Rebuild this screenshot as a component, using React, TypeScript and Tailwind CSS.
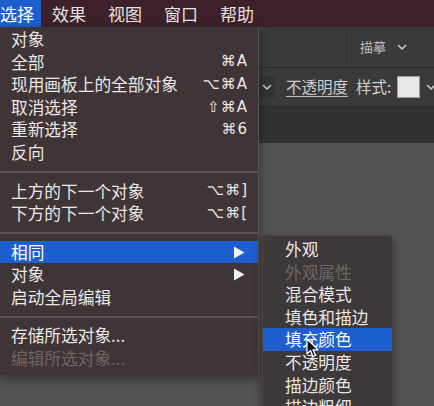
import React from 'react';

type Item = { label: string; shortcut?: string; arrow?: boolean; active?: boolean; disabled?: boolean } | 'sep';

const menuItems: Item[] = [
  { label: '对象' },
  { label: '全部', shortcut: '⌘A' },
  { label: '现用画板上的全部对象', shortcut: '⌥⌘A' },
  { label: '取消选择', shortcut: '⇧⌘A' },
  { label: '重新选择', shortcut: '⌘6' },
  { label: '反向' },
  'sep',
  { label: '上方的下一个对象', shortcut: '⌥⌘]' },
  { label: '下方的下一个对象', shortcut: '⌥⌘[' },
  'sep',
  { label: '相同', arrow: true, active: true },
  { label: '对象', arrow: true },
  { label: '启动全局编辑' },
  'sep',
  { label: '存储所选对象...' },
  { label: '编辑所选对象...', disabled: true },
];

const subItems: { label: string; active?: boolean; disabled?: boolean }[] = [
  { label: '外观' },
  { label: '外观属性', disabled: true },
  { label: '混合模式' },
  { label: '填色和描边' },
  { label: '填充颜色', active: true },
  { label: '不透明度' },
  { label: '描边颜色' },
  { label: '描边粗细' },
];

const font = { fontFamily: '"Noto Sans CJK SC", "DejaVu Sans", sans-serif' };

const Chevron = ({ className = '' }: { className?: string }) => (
  <svg width="10" height="7" viewBox="0 0 10 7" className={`shrink-0 ${className}`}>
    <path d="M1.5 1.5 L5 5 L8.5 1.5" fill="none" stroke="#c9c9c9" strokeWidth="1.6" strokeLinecap="round" strokeLinejoin="round" />
  </svg>
);

export default function App() {
  return (
    <div className="relative w-[434px] h-[406px] overflow-hidden bg-[#535353] text-[#ebe7e7]" style={font}>
      {/* Menu bar */}
      <div className="flex h-[27px] bg-[#3d2029] text-[17px] leading-[27px] text-[#e6e1e2] whitespace-nowrap">
        <div className="w-[41px] shrink-0 bg-[#1d5fcf] text-white pl-0">选择</div>
        <div className="px-[11px]">效果</div>
        <div className="px-[11px]">视图</div>
        <div className="px-[11px]">窗口</div>
        <div className="px-[11px]">帮助</div>
      </div>

      {/* Control bar behind the menu */}
      <div className="flex h-[41px] bg-[#3a3a3a] border-b border-[#2e2e2e]">
        <div className="w-[347px] shrink-0 border-r border-[#333]" />
        <div className="flex items-center gap-[11px] pl-[13px] text-[13px] text-[#bdbdbd] whitespace-nowrap">
          <span>描摹</span>
          <Chevron />
        </div>
      </div>
      <div className="flex items-center h-[39px] bg-[#3a3a3a] border-b border-[#2a2a2a] text-[15.5px] text-[#cfcfcf] whitespace-nowrap">
        <div className="w-[258px] shrink-0" />
        <div className="flex shrink-0 items-center justify-center w-[17px] h-[22px] bg-[#333]">
          <Chevron />
        </div>
        <span className="ml-[11px] shrink-0 underline underline-offset-[3px] decoration-[#bdbdbd]">不透明度</span>
        <span className="ml-[8px] shrink-0">样式:</span>
        <div className="ml-[6px] shrink-0 w-[23px] h-[22px] bg-[#e8e8e8] border border-[#9a9a9a]" />
        <Chevron className="ml-[6px]" />
      </div>
      <div className="h-[36px] bg-[#323232]" />

      {/* Select dropdown */}
      <div className="absolute left-0 top-[27px] w-[259px] pt-[1px] pb-[5px] bg-[#3f3536] border-r border-[#5a5153] shadow-[0_4px_10px_rgba(0,0,0,0.4)] text-[16.7px]">
        {menuItems.map((it, i) =>
          it === 'sep' ? (
            <div key={i} className="h-[16px] flex items-center">
              <div className="w-full h-[2px] bg-[#5b5355]" />
            </div>
          ) : (
            <div
              key={i}
              className={`flex items-center h-[22.6px] pl-[11px] pr-[10px] ${it.active ? 'bg-[#1d5fcf] text-white' : ''} ${it.disabled ? 'text-[#6d6566]' : ''}`}
            >
              <span className="flex-1 leading-none">{it.label}</span>
              {it.shortcut && (
                <span className="leading-none text-[15px] tracking-[1px]" style={{ fontFamily: '"DejaVu Sans", sans-serif' }}>
                  {it.shortcut}
                </span>
              )}
              {it.arrow && (
                <svg width="12" height="13" viewBox="0 0 12 13" className="mr-[3px]">
                  <path d="M1 0.5 L11.5 6.5 L1 12.5 Z" fill="#f2f2f2" />
                </svg>
              )}
            </div>
          )
        )}
      </div>

      {/* Submenu */}
      <div className="absolute left-[262px] top-[235px] w-[131px] pt-[2px] bg-[#3d3839] rounded-t-[4px] border border-[#4a4446] text-[16.7px] shadow-[0_4px_10px_rgba(0,0,0,0.4)]">
        {subItems.map((it, i) => (
          <div
            key={i}
            className={`flex items-center h-[22.6px] pl-[22px] leading-none ${it.active ? 'bg-[#1d5fcf] text-white' : ''} ${it.disabled ? 'text-[#6d6566]' : ''}`}
          >
            {it.label}
          </div>
        ))}
      </div>

      {/* Mouse pointer */}
      <svg className="absolute left-[306px] top-[338px]" width="14" height="21" viewBox="0 0 14 21">
        <path d="M1 1 L1 16 L4.5 12.5 L7 18.5 L9.5 17.5 L7 11.8 L12 11.8 Z" fill="#111" stroke="#fff" strokeWidth="1.2" strokeLinejoin="round" />
      </svg>
    </div>
  );
}
